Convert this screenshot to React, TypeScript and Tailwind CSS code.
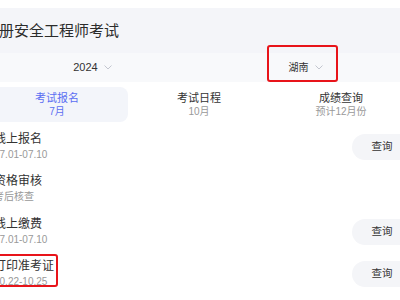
import React from "react";

function Chevron() {
  return (
    <svg width="8" height="5" viewBox="0 0 8 5" fill="none">
      <polyline points="0.5,0.5 4,4 7.5,0.5" stroke="#c3c6cf" strokeWidth="1" fill="none" />
    </svg>
  );
}

const rows = [
  { title: "线上报名", sub: "07.01-07.10", btn: true },
  { title: "资格审核", sub: "考后核查", btn: false },
  { title: "线上缴费", sub: "07.01-07.10", btn: true },
  { title: "打印准考证", sub: "10.22-10.25", btn: true },
];

export default function App() {
  return (
    <div className="relative w-[400px] h-[300px] overflow-hidden bg-white font-['Liberation_Sans','Noto_Sans_CJK_SC',sans-serif]">
      <div className="ml-[-14px] w-[426px]">
        <div className="h-[8px] bg-white" />
        <div className="h-[45px] bg-[#f4f5f9] flex items-center">
          <span className="ml-[-2px] text-[15px] leading-none text-[#2b2b2b] whitespace-nowrap">注册安全工程师考试</span>
        </div>
        <div className="h-[29px] bg-[#f8f9fb] grid grid-cols-2">
          <div className="flex items-center justify-center gap-[6px]">
            <span className="text-[11px] text-[#333]">2024</span>
            <Chevron />
          </div>
          <div className="flex items-center justify-center gap-[6px]">
            <span className="text-[10px] text-[#333]">湖南</span>
            <Chevron />
          </div>
        </div>
        <div className="mt-[5px] h-[35px] grid grid-cols-3">
          <div className="rounded-[8px] bg-[#f3f5fa] flex flex-col items-center justify-center">
            <span className="text-[11px] leading-[13px] text-[#5b6ef2]">考试报名</span>
            <span className="text-[10px] leading-[13px] text-[#5b6ef2]">7月</span>
          </div>
          <div className="flex flex-col items-center justify-center">
            <span className="text-[11px] leading-[13px] text-[#333]">考试日程</span>
            <span className="text-[10px] leading-[13px] text-[#999]">10月</span>
          </div>
          <div className="flex flex-col items-center justify-center">
            <span className="text-[11px] leading-[13px] text-[#333]">成绩查询</span>
            <span className="text-[10px] leading-[13px] text-[#999]">预计12月份</span>
          </div>
        </div>
        <div className="mt-[4px] flex flex-col">
          {rows.map((r) => (
            <div key={r.title} className="h-[42.33px] flex items-center justify-between pl-[8px]">
              <div className="flex flex-col">
                <span className="text-[12px] leading-[15px] text-[#333] whitespace-nowrap">{r.title}</span>
                <span className="text-[10px] leading-[15px] text-[#999] whitespace-nowrap">{r.sub}</span>
              </div>
              {r.btn && (
                <div className="w-[60px] h-[26px] rounded-full bg-[#f4f5f8] flex items-center justify-center text-[10.5px] text-[#333]">
                  查询
                </div>
              )}
            </div>
          ))}
        </div>
      </div>
      <div className="absolute left-[267px] top-[45px] w-[71px] h-[37px] border-2 border-[#e8141a] rounded-[3px]" />
      <div className="absolute left-[-6px] top-[254px] w-[64px] h-[33px] border-2 border-[#e8141a] rounded-[3px]" />
    </div>
  );
}
